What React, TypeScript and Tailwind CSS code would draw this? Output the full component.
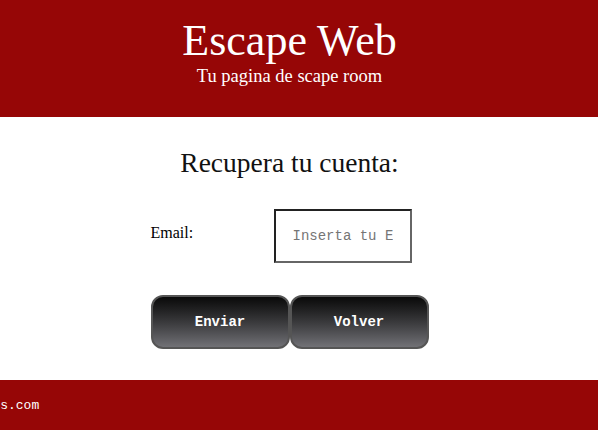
export default function App() {
  return (
    <div className="w-[598px] h-[430px] overflow-hidden bg-white flex flex-col">
      {/* Header */}
      <header className="h-[117px] shrink-0 bg-[#960606] text-white pr-[19px] flex flex-col items-center" style={{ fontFamily: '"Liberation Serif", serif' }}>
        <h1 className="mt-[20px] text-[44px] leading-[42px]">Escape Web</h1>
        <p className="mt-[5px] text-[18.5px] leading-[18px]">Tu pagina de scape room</p>
      </header>

      {/* Main */}
      <main className="flex-1 pr-[19px] flex flex-col items-center" style={{ fontFamily: '"Liberation Serif", serif' }}>
        <h2 className="mt-[30px] text-[27.5px] leading-[32px] text-[#111]">Recupera tu cuenta:</h2>

        <form className="mt-[30px] w-[278px] flex flex-col">
          <div className="flex items-start">
            <label className="w-[123px] mt-[14px] text-[16px] leading-[20px] text-black">Email:</label>
            <input
              type="email"
              placeholder="Inserta tu Email"
              className="w-[138px] h-[54px] pl-[17px] pr-[17px] border-2 border-t-[#222] border-l-[#222] border-r-[#666] border-b-[#666] text-[14px] placeholder:text-[#757575] outline-none"
              style={{ fontFamily: '"Liberation Mono", monospace' }}
            />
          </div>
          <div className="mt-[32px] flex" style={{ fontFamily: '"Liberation Mono", monospace' }}>
            <button type="button" className="w-[139px] h-[54px] rounded-[12px] border-2 border-[#555] bg-gradient-to-b from-[#0a0a0a] to-[#717176] text-white text-[14px] font-bold">
              Enviar
            </button>
            <button type="button" className="w-[139px] h-[54px] rounded-[12px] border-2 border-[#555] bg-gradient-to-b from-[#0a0a0a] to-[#717176] text-white text-[14px] font-bold">
              Volver
            </button>
          </div>
        </form>
      </main>

      {/* Footer */}
      <footer className="h-[50px] shrink-0 bg-[#960606] overflow-hidden flex items-center">
        <span className="-ml-[70px] mt-[2px] whitespace-nowrap text-white text-[13px]" style={{ fontFamily: '"Liberation Mono", monospace' }}>
          escapewebs.com
        </span>
      </footer>
    </div>
  );
}
